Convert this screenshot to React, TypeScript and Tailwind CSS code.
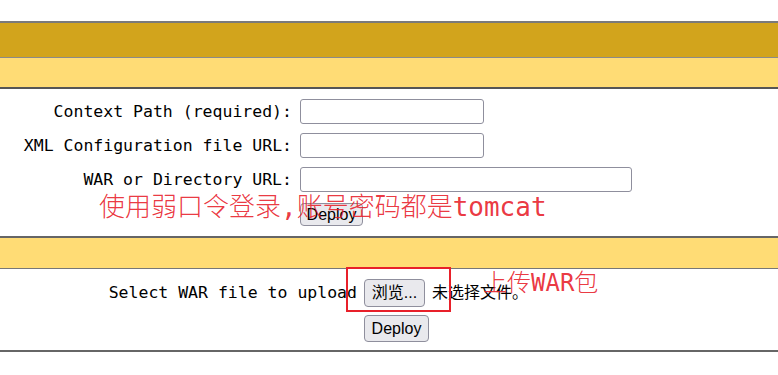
import React from 'react'

const mono = { fontFamily: '"DejaVu Sans Mono", "Noto Sans CJK SC", monospace' }
const sans = { fontFamily: '"Liberation Sans", "Noto Sans CJK SC", sans-serif' }

const fields = [
  { label: 'Context Path (required):', width: 'w-[184px]' },
  { label: 'XML Configuration file URL:', width: 'w-[184px]' },
  { label: 'WAR or Directory URL:', width: 'w-[332px]' },
]

export default function App() {
  return (
    <div className="relative w-[778px] h-[375px] bg-white overflow-hidden text-black">
      <div className="h-[21px]" />

      {/* Title bar */}
      <div className="h-[36px] bg-[#D2A41C] border-t-2 border-[#7a7a7a]" />
      <div className="h-[32px] bg-[#FFDC75] border-t border-[#8a8a8a] border-b-2 border-b-[#555555]" />

      {/* Deploy directory or WAR file located on server */}
      <div className="pt-[10px] pb-[10px]">
        <div className="flex flex-col gap-[9px]">
          {fields.map((f) => (
            <div key={f.label} className="flex items-center h-[25px]">
              <div className="w-[292px] text-right text-[16.5px] leading-none pt-[1px]" style={mono}>
                {f.label}
              </div>
              <input
                type="text"
                className={`ml-[8px] h-[25px] ${f.width} border border-[#8f8f9d] rounded-[3px] bg-white`}
              />
            </div>
          ))}
        </div>
        <div className="flex mt-[11px] pl-[300px]">
          <button
            type="button"
            className="h-[23px] w-[63px] border border-[#8f8f9d] rounded-[4px] bg-[#e9e9ed] text-[16px] leading-none"
            style={sans}
          >
            Deploy
          </button>
        </div>
      </div>

      <div className="h-[33px] bg-[#FFDC75] border-t-2 border-[#666666] border-b border-b-[#777777]" />

      {/* Upload WAR */}
      <div className="h-[81px] pt-[10px]">
        <div className="flex items-center h-[28px]">
          <div className="w-[357px] text-right text-[16.5px] leading-none pt-[1px]" style={mono}>
            Select WAR file to upload
          </div>
          <button
            type="button"
            className="ml-[7px] h-[28px] w-[61px] border border-[#8f8f9d] rounded-[4px] bg-[#e9e9ed] text-[16px] leading-none"
            style={sans}
          >
            浏览...
          </button>
          <span className="ml-[7px] text-[16px] leading-none" style={sans}>
            未选择文件。
          </span>
        </div>
        <div className="flex mt-[8px] pl-[364px]">
          <button
            type="button"
            className="h-[27px] w-[65px] border border-[#8f8f9d] rounded-[4px] bg-[#e9e9ed] text-[16px] leading-none"
            style={sans}
          >
            Deploy
          </button>
        </div>
      </div>
      <div className="border-t-2 border-[#666666]" />

      {/* annotations */}
      <div
        className="absolute left-[99px] top-[194px] text-[26px] leading-none text-[#e8202a]/90 whitespace-nowrap font-light"
        style={mono}
      >
        使用弱口令登录,账号密码都是tomcat
      </div>
      <div
        className="absolute left-[483px] top-[271px] text-[24px] leading-none text-[#e8202a]/90 whitespace-nowrap font-light"
        style={mono}
      >
        上传WAR包
      </div>
      <div className="absolute left-[346px] top-[267px] w-[105px] h-[45px] border-2 border-[#e8202a]" />
    </div>
  )
}
